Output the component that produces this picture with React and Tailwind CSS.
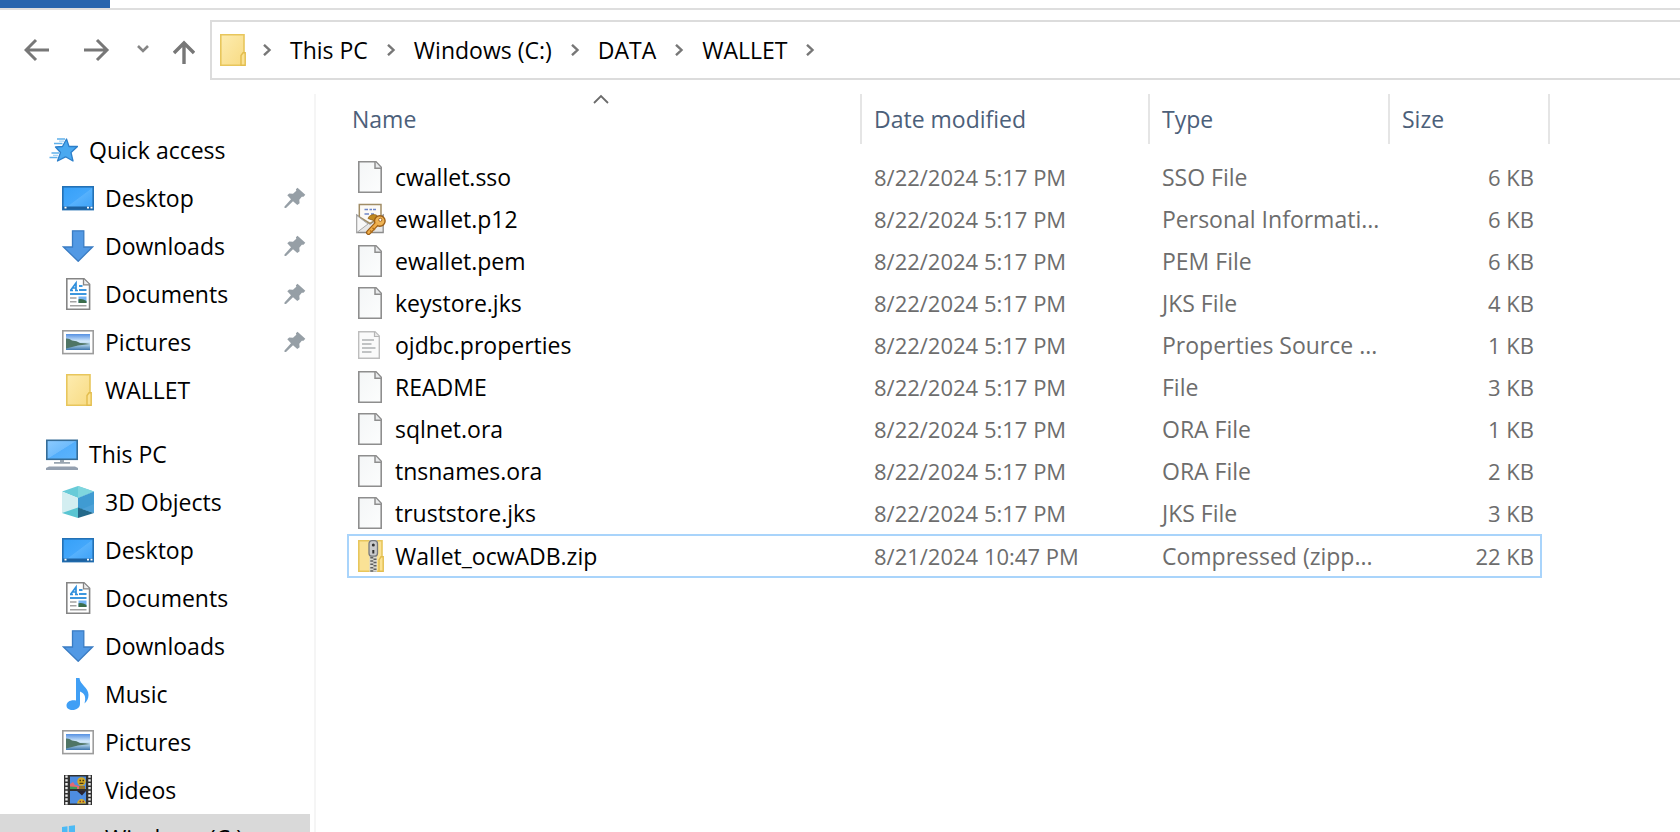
import React from "react";

function FolderIcon() {
  return (
    <svg className="size-8 shrink-0" viewBox="0 0 32 32" aria-hidden="true">
      <defs>
        <linearGradient id="folderFill" x1="0" y1="0" x2="1" y2="1">
          <stop offset="0" stopColor="#fdecb0" />
          <stop offset="1" stopColor="#f8db83" />
        </linearGradient>
      </defs>
      <path d="M4.800 .8H28V31.200H4.800z" fill="url(#folderFill)" stroke="#e8c65c" strokeWidth="1.600" />
      <path d="M25 31.200V21.500L27 18.800H29.200V31.200z" fill="#fbe293" stroke="#e3bd4d" strokeWidth="1.400" />
    </svg>
  );
}

function StarIcon() {
  return (
    <svg className="size-8 shrink-0" viewBox="-2 0 32 32" aria-hidden="true">
      <path d="M18.500 5L21 12.500H29.500L23 18.500L25 27L17.500 22.800L9.500 27L12.500 18.500L7.500 13L14.500 12.500Z" fill="#4aa9f0" stroke="#2c7fca" strokeWidth="1.300" strokeLinejoin="round" />
      <path d="M9 5H17M6 9.500H14.500M3.500 19H11M1.500 23.500H9.500" stroke="#5fb0ea" strokeWidth="1.500" />
      <path d="M11 7.200H16M5 21.300H10" stroke="#a9d5f5" strokeWidth="1.200" />
    </svg>
  );
}

function DesktopIcon() {
  return (
    <svg className="size-8 shrink-0" viewBox="0 0 32 32" aria-hidden="true">
      <defs>
        <linearGradient id="deskFill" x1="0" y1="0" x2="1" y2="1">
          <stop offset="0" stopColor="#35a0f8" />
          <stop offset=".5" stopColor="#43a7fb" />
          <stop offset=".52" stopColor="#56b1fc" />
          <stop offset="1" stopColor="#3ba0f7" />
        </linearGradient>
      </defs>
      <rect x=".8" y="4.800" width="30.400" height="22.800" fill="url(#deskFill)" stroke="#2371b5" strokeWidth="1.600" />
      <rect x="1" y="24.500" width="30" height="3" fill="#1d62a1" />
      <path d="M2.500 25.700h2M25 25.700h2M28.500 25.700h2" stroke="#fff" strokeWidth="1.800" />
    </svg>
  );
}

function DownloadsIcon() {
  return (
    <svg className="size-8 shrink-0" viewBox="0 0 32 32" aria-hidden="true">
      <path d="M10.500 .8H21.800V17H30.500L16.200 31.300L1.500 17H10.500Z" fill="#5299e4" stroke="#3a7cc3" strokeWidth="1.300" />
    </svg>
  );
}

function DocumentsIcon() {
  return (
    <svg className="size-8 shrink-0" viewBox="0 0 32 32" aria-hidden="true">
      <path d="M4.800 .8H22L27.600 6.400V31.200H4.800Z" fill="#fff" stroke="#858585" strokeWidth="1.600" />
      <path d="M21.500 1V6.800H27.500" fill="#ededed" stroke="#858585" strokeWidth="1.300" />
      <path d="M8.500 12.500L14 5V12.500M10.500 10H14.500M8 12.500h3M13 12.500h3" stroke="#2f8fdc" strokeWidth="1.700" fill="none" />
      <path d="M17 8H20.500M17 12H24.500M8 16H24.500" stroke="#3d97de" strokeWidth="1.900" />
      <path d="M8 20H14.500M8 23.800H14.500M8 27.700H24.500" stroke="#a2a2a2" strokeWidth="1.500" />
      <rect x="16.500" y="18.500" width="8" height="6.500" fill="#74b3f2" />
      <path d="M16.500 21.300Q20 20 24.500 23V25H16.500Z" fill="#3b6d4b" />
    </svg>
  );
}

function PicturesIcon() {
  return (
    <svg className="size-8 shrink-0" viewBox="0 0 32 32" aria-hidden="true">
      <defs>
        <linearGradient id="skyFill" x1="0" y1="0" x2="0" y2="1">
          <stop offset="0" stopColor="#5590e2" />
          <stop offset=".45" stopColor="#d3e9fb" />
          <stop offset=".7" stopColor="#a3c8e2" />
          <stop offset="1" stopColor="#3f77ad" />
        </linearGradient>
      </defs>
      <rect x=".8" y="4.800" width="30.400" height="22.800" fill="#fff" stroke="#9d9d9d" strokeWidth="1.600" />
      <rect x="4" y="8" width="24" height="16" fill="url(#skyFill)" />
      <path d="M4 12.500Q7 12 10 14.500Q15 14.500 18 17Q23 17 28 18L16 19.500L4 22.500Z" fill="#4f7565" />
    </svg>
  );
}

function ComputerIcon() {
  return (
    <svg className="size-8 shrink-0" viewBox="0 0 32 32" aria-hidden="true">
      <defs>
        <linearGradient id="screenFill" x1="0" y1="0" x2="1" y2="1">
          <stop offset="0" stopColor="#8ccbff" />
          <stop offset=".49" stopColor="#70bcfc" />
          <stop offset=".51" stopColor="#53aefb" />
          <stop offset="1" stopColor="#5db4fc" />
        </linearGradient>
      </defs>
      <rect x=".8" y="2.300" width="30.400" height="19" fill="url(#screenFill)" stroke="#356c97" strokeWidth="1.600" />
      <path d="M14 22H18V24H24V25.800H8V24H14Z" fill="#99a5b1" />
      <path d="M3 28.500H29L32 30V32H0V30Z" fill="#94a0b0" />
    </svg>
  );
}

function CubeIcon() {
  return (
    <svg className="size-8 shrink-0" viewBox="0 0 32 32" aria-hidden="true">
      <path d="M16 0L32 5.500L16 12L0 5.500Z" fill="#68cbd8" />
      <path d="M16 0L32 5.500L16 12Z" fill="#7fd6de" />
      <path d="M0 5.500L16 12V24L0 27Z" fill="#d3eef1" />
      <path d="M16 12L32 5.500V27L16 22Z" fill="#409bd2" />
      <path d="M0 27L16 21.500V32Z" fill="#5ac5d2" />
      <path d="M16 21.500L32 27L16 32Z" fill="#24698a" />
      <path d="M20 23L32 18V27Z" fill="#4da2d8" />
    </svg>
  );
}

function MusicIcon() {
  return (
    <svg className="size-8 shrink-0" viewBox="0 0 32 32" aria-hidden="true">
      <path d="M14 0H17.500C18 7 26.500 9 26.500 17C26.500 20.500 25 23.500 22.500 25.500C24.500 18 22 15 18 13.500V26C18 29.500 14.500 32 10.500 32C7 32 4.500 30.300 4.500 27.500C4.500 24 8.500 21.500 14 22.500Z" fill="#409ff5" />
    </svg>
  );
}

function VideosIcon() {
  return (
    <svg className="size-8 shrink-0" viewBox="0 0 32 32" aria-hidden="true">
      <rect x="2" y="1" width="28" height="30" fill="#303030" />
      <path d="M4.500 1.500V31M27.500 1.500V31" stroke="#ececec" strokeWidth="2.400" strokeDasharray="2.300 1.500" />
      <rect x="8" y="2.500" width="16" height="12.500" fill="#4e8de0" />
      <rect x="8" y="17" width="16" height="12.500" fill="#4e8de0" />
      <path d="M8 10L11 8L13 11L17 12V15H8Z" fill="#e36a72" />
      <path d="M8 12.500L15 13V15H8Z" fill="#3d9c58" />
      <circle cx="19.500" cy="7.500" r="4.200" fill="#d3a823" />
      <path d="M17.500 6.500h1.500M20.500 6.500h1.500M17.500 9.300h4" stroke="#493814" strokeWidth="1.300" />
      <path d="M17 12H23V15H17Z" fill="#99742a" />
      <path d="M15 17H24L20 21.500Z" fill="#292431" />
      <path d="M15 29.500C16 23.500 23 23.500 24 29.500Z" fill="#d8af27" />
      <path d="M17.500 27.500h1.500M20.500 27.500h1.500" stroke="#8d3533" strokeWidth="1.300" />
    </svg>
  );
}

function DriveIcon() {
  return (
    <svg className="size-8 shrink-0" viewBox="0 0 32 32" aria-hidden="true">
      <path d="M0 5L5.500 4.200V10H0ZM6.800 4L13 3.200V10H6.800ZM0 11.200H5.500V16L0 15.300ZM6.800 11.200H13V17L6.800 16.200Z" fill="#4cbaf5" />
      <path d="M0 19H32V28H0Z" fill="#a5a9ad" />
      <path d="M25 24H29" stroke="#7bea79" strokeWidth="2" />
    </svg>
  );
}

function PinIcon() {
  return (
    <svg className="size-[22px] shrink-0" viewBox="0 0 22 22" aria-hidden="true">
      <path d="M13.500 .8L21.300 7.800L19.500 9.800L17.800 9.800L15.300 12.800L15.600 16.200L13.300 18L9 14.300L2 21H.5V19.500L7 12.300L3.300 8.300L5.200 6.400L9 6.700L12.300 3.700L11.900 2.200Z" fill="#969fa6" />
    </svg>
  );
}

function FileIcon() {
  return (
    <svg className="size-8 shrink-0" viewBox="0 0 32 32" aria-hidden="true">
      <defs>
        <linearGradient id="pageFill" x1="0" y1="0" x2="1" y2="1">
          <stop offset="0" stopColor="#f4f6f7" />
          <stop offset="1" stopColor="#fcfdfd" />
        </linearGradient>
      </defs>
      <path d="M4.800 .8H22L27.200 6.300V31.200H4.800Z" fill="url(#pageFill)" stroke="#8e8e8e" strokeWidth="1.600" />
      <path d="M21 1V7.300H27" fill="#e9ebec" stroke="#8e8e8e" strokeWidth="1.500" />
    </svg>
  );
}

function TextFileIcon() {
  return (
    <svg className="size-8 shrink-0" viewBox="0 0 32 32" aria-hidden="true">
      <path d="M4.700 2.700H21L25.300 7V29.300H4.700Z" fill="#fafafa" stroke="#bdbdbd" strokeWidth="1.400" />
      <path d="M20.500 3V7.500H25" fill="#e9e9e9" stroke="#b5b5b5" strokeWidth="1.200" />
      <path d="M8 11H20M8 15H17.500M8 19H21.500M8 23H17.500" stroke="#aeb1b3" strokeWidth="1.500" />
    </svg>
  );
}

function CertificateIcon() {
  return (
    <svg className="size-8 shrink-0" viewBox="0 0 32 32" aria-hidden="true">
      <path d="M2.800 12L16 21L29.200 12V29.500H2.800Z" fill="#e7e7e7" stroke="#8c8c8c" strokeWidth="1.300" />
      <path d="M5.300 14V1.500H27V14L16 20.500Z" fill="#fcfaf6" stroke="#a18d66" strokeWidth="1.500" />
      <path d="M2.800 12.500L14 21L2.800 29.500Z" fill="#f8f8f8" stroke="#a9a9a9" strokeWidth="1" />
      <path d="M10.500 6.500H14M15.500 6.500H18M19 6.500H22M10.500 11H15M17 11H20" stroke="#6c85c8" strokeWidth="1.600" />
      <path d="M14 15.500C15 12 20 10.500 23 12.500L21 18Z" fill="#c28a20" stroke="#91611b" strokeWidth=".8" />
      <path d="M22.500 21L14.500 29.500" stroke="#9c5e16" strokeWidth="5" strokeLinecap="round" />
      <circle cx="25.800" cy="18" r="5.300" fill="#efb455" stroke="#9c5e16" strokeWidth="1.400" />
      <path d="M22.500 21L14.500 29.500" stroke="#efad49" strokeWidth="2.600" strokeLinecap="round" />
      <path d="M16 27.500L18.500 29.500M18.500 24.800L21 27" stroke="#b4731f" strokeWidth="1.500" />
      <circle cx="26.300" cy="16.800" r="1.600" fill="#fff" stroke="#9c5e16" strokeWidth=".9" />
    </svg>
  );
}

function ZipIcon() {
  return (
    <svg className="size-8 shrink-0" viewBox="0 0 32 32" aria-hidden="true">
      <path d="M4.800 .8H28V31.200H4.800z" fill="#fae296" stroke="#e8c65c" strokeWidth="1.600" />
      <path d="M25 31.200V20L27 16.800H29.200V31.200z" fill="#fbe293" stroke="#e3bd4d" strokeWidth="1.400" />
      <path d="M15.500 0H23V32H15.500Z" fill="#d9d8d0" />
      <path d="M17.800 17V32M21 18.500V32" stroke="#5e5e5e" strokeWidth="3" strokeDasharray="1.500 1.800" />
      <rect x="15" y=".7" width="8.500" height="15.500" rx="3" fill="#c9cacc" stroke="#77797c" strokeWidth="1.300" />
      <circle cx="19.300" cy="5" r="1.500" fill="#303030" />
      <path d="M19.300 10V13.500" stroke="#303030" strokeWidth="2" />
    </svg>
  );
}

function CrumbChevron() {
  return (
    <svg className="h-3 w-[10px] shrink-0" viewBox="0 0 10 12" aria-hidden="true">
      <path d="M2 .8L7.500 6L2 11.200" fill="none" stroke="#777" strokeWidth="2.400" />
    </svg>
  );
}

const quickAccess = [
  { label: "Desktop", Icon: DesktopIcon, pinned: true },
  { label: "Downloads", Icon: DownloadsIcon, pinned: true },
  { label: "Documents", Icon: DocumentsIcon, pinned: true },
  { label: "Pictures", Icon: PicturesIcon, pinned: true },
  { label: "WALLET", Icon: FolderIcon },
];

const thisPc = [
  { label: "3D Objects", Icon: CubeIcon },
  { label: "Desktop", Icon: DesktopIcon },
  { label: "Documents", Icon: DocumentsIcon },
  { label: "Downloads", Icon: DownloadsIcon },
  { label: "Music", Icon: MusicIcon },
  { label: "Pictures", Icon: PicturesIcon },
  { label: "Videos", Icon: VideosIcon },
  { label: "Windows (C:)", Icon: DriveIcon, active: true },
];

const files = [
  ["cwallet.sso", "8/22/2024 5:17 PM", "SSO File", "6 KB", FileIcon],
  ["ewallet.p12", "8/22/2024 5:17 PM", "Personal Informati...", "6 KB", CertificateIcon],
  ["ewallet.pem", "8/22/2024 5:17 PM", "PEM File", "6 KB", FileIcon],
  ["keystore.jks", "8/22/2024 5:17 PM", "JKS File", "4 KB", FileIcon],
  ["ojdbc.properties", "8/22/2024 5:17 PM", "Properties Source ...", "1 KB", TextFileIcon],
  ["README", "8/22/2024 5:17 PM", "File", "3 KB", FileIcon],
  ["sqlnet.ora", "8/22/2024 5:17 PM", "ORA File", "1 KB", FileIcon],
  ["tnsnames.ora", "8/22/2024 5:17 PM", "ORA File", "2 KB", FileIcon],
  ["truststore.jks", "8/22/2024 5:17 PM", "JKS File", "3 KB", FileIcon],
  ["Wallet_ocwADB.zip", "8/21/2024 10:47 PM", "Compressed (zipp...", "22 KB", ZipIcon],
];

const crumbs = ["This PC", "Windows (C:)", "DATA", "WALLET"];

function TreeGroup({ label, Icon, items }) {
  return (
    <section>
      <a href="#" className="flex h-12 items-center gap-[11px] pl-[46px]">
        <Icon />
        {label}
      </a>
      <ul>
        {items.map(({ label: name, Icon: ItemIcon, pinned, active }) => (
          <li key={name} className={active ? "mr-1 bg-[#d9d9d9]" : "mr-1"}>
            <a href="#" className="flex h-12 items-center gap-[11px] pr-1 pl-[62px]">
              <ItemIcon />
              <span className="grow">{name}</span>
              {pinned && <PinIcon />}
            </a>
          </li>
        ))}
      </ul>
    </section>
  );
}

function HeaderCell({ children, sorted }) {
  return (
    <th scope="col" aria-sort={sorted ? "ascending" : undefined} className="relative h-[62px] p-0 text-left align-top font-normal">
      {sorted && (
        <div className="absolute inset-x-0 top-0 flex justify-center pr-2">
          <svg className="h-[10px] w-4" viewBox="0 0 16 10" aria-hidden="true">
            <path d="M1 9L8 2L15 9" fill="none" stroke="#6b6b6b" strokeWidth="1.800" />
          </svg>
        </div>
      )}
      <button
        type="button"
        className={
          sorted
            ? "flex h-[50px] w-full items-center border-r-2 border-[#e5e5e5] pl-[5px]"
            : "flex h-[50px] w-full items-center border-r-2 border-[#e5e5e5] pl-3"
        }
      >
        {children}
      </button>
    </th>
  );
}

function FileRow({ file }) {
  const [name, modified, type, size, Icon] = file;
  const selected = name === "Wallet_ocwADB.zip";
  const edge = selected ? "border-[#a9d4fb]" : "border-transparent";
  return (
    <tr className={selected ? "h-[44px]" : "h-[42px]"} aria-selected={selected}>
      <td className={`border-y-2 border-l-2 p-0 pl-[5px] text-black ${edge}`}>
        <div className="flex items-center gap-[9px]">
          <Icon />
          {name}
        </div>
      </td>
      <td className={`border-y-2 p-0 pl-3 text-[22px] ${edge}`}>{modified}</td>
      <td className={`border-y-2 p-0 pl-3 ${edge}`}>{type}</td>
      <td className={`border-y-2 border-r-2 p-0 pr-[6px] text-right text-[22px] ${edge}`}>{size}</td>
      <td className="p-0" />
    </tr>
  );
}

export default function App() {
  return (
    <div className="flex h-screen flex-col overflow-hidden bg-white font-['Open_Sans','Noto_Sans',sans-serif] text-[23px] leading-8 whitespace-nowrap text-black">
      <div className="h-[10px] shrink-0 border-b-2 border-[#dedede]">
        <div className="h-2 w-[110px] bg-[#2865ae]" />
      </div>

      <header className="flex h-[84px] shrink-0 items-start pt-[10px]">
        <div className="flex h-[60px] w-[210px] shrink-0 items-center pl-6">
          <button type="button" aria-label="Back">
            <svg className="h-[26px] w-[26px]" viewBox="0 0 26 26">
              <path d="M25 13H2M12 3L2 13L12 23" fill="none" stroke="#777" strokeWidth="3" />
            </svg>
          </button>
          <button type="button" aria-label="Forward" className="ml-[34px]">
            <svg className="h-[26px] w-[26px]" viewBox="0 0 26 26">
              <path d="M0 13H23M13 3L23 13L13 23" fill="none" stroke="#777" strokeWidth="3" />
            </svg>
          </button>
          <button type="button" aria-label="Recent locations" className="ml-[27px]">
            <svg className="h-[10px] w-3" viewBox="0 0 12 10">
              <path d="M1 1L6 6L11 1" fill="none" stroke="#858585" strokeWidth="2.600" />
            </svg>
          </button>
          <button type="button" aria-label="Up" className="ml-6 pt-1">
            <svg className="h-6 w-[22px]" viewBox="0 0 22 24">
              <path d="M11 24V3M1 13L11 3L21 13" fill="none" stroke="#777" strokeWidth="3.400" />
            </svg>
          </button>
        </div>
        <nav aria-label="Address" className="flex h-[60px] grow items-center gap-[18px] border-y-2 border-l-2 border-[#dcdcdc] pl-1">
          <div className="flex items-center gap-[14px]">
            <FolderIcon />
            <CrumbChevron />
          </div>
          {crumbs.map((crumb) => (
            <React.Fragment key={crumb}>
              <a href="#">{crumb}</a>
              <CrumbChevron />
            </React.Fragment>
          ))}
        </nav>
      </header>

      <div className="flex min-h-0 grow">
        <aside className="flex w-[316px] shrink-0 flex-col gap-4 border-r-2 border-[#f5f5f5] pt-8">
          <TreeGroup label="Quick access" Icon={StarIcon} items={quickAccess} />
          <TreeGroup label="This PC" Icon={ComputerIcon} items={thisPc} />
        </aside>

        <main className="min-w-0 grow pl-[31px]">
          <table className="w-[1203px] table-fixed border-separate border-spacing-0 text-[#6d6d6d]">
            <colgroup>
              <col className="w-[515px]" />
              <col className="w-[288px]" />
              <col className="w-[240px]" />
              <col className="w-[152px]" />
              <col className="w-2" />
            </colgroup>
            <thead className="text-[#4c607a]">
              <tr>
                <HeaderCell sorted>Name</HeaderCell>
                <HeaderCell>Date modified</HeaderCell>
                <HeaderCell>Type</HeaderCell>
                <th scope="col" colSpan={2} className="h-[62px] p-0 text-left align-top font-normal">
                  <button type="button" className="flex h-[50px] w-full items-center border-r-2 border-[#e5e5e5] pl-3">
                    Size
                  </button>
                </th>
              </tr>
            </thead>
            <tbody>
              {files.map((file) => (
                <FileRow key={file[0]} file={file} />
              ))}
            </tbody>
          </table>
        </main>
      </div>
    </div>
  );
}
